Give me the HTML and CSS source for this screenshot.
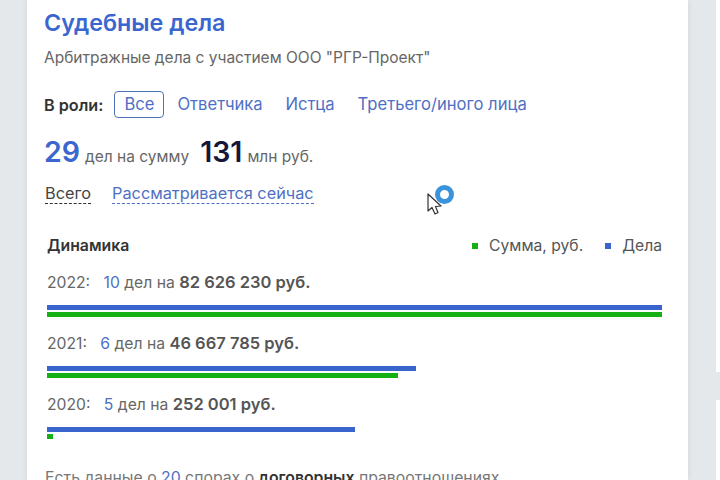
FILE: index.html
```html
<!DOCTYPE html>
<html lang="ru">
<head>
  <meta charset="UTF-8">
  <title>Судебные дела</title>
  <link rel="stylesheet" href="styles.css">
</head>
<body>
  <div class="page">
    <div class="card">
      <h1>Судебные дела</h1>
      <p class="subtitle">Арбитражные дела с участием ООО "РГР-Проект"</p>
      <div class="roles">
        <span class="roles-label">В роли:</span>
        <a class="role role-active">Все</a>
        <a class="role">Ответчика</a>
        <a class="role">Истца</a>
        <a class="role">Третьего/иного лица</a>
      </div>
      <div class="total">
        <span class="total-count">29</span>
        <span class="total-text">дел на сумму</span>
        <span class="total-sum">131</span>
        <span class="total-text">млн руб.</span>
      </div>
      <div class="tabs">
        <a class="tab tab-active">Всего</a>
        <a class="tab">Рассматривается сейчас</a>
      </div>
      <div class="dynamics">
        <div class="dynamics-head">
          <span class="dynamics-title">Динамика</span>
          <div class="legend">
            <span class="legend-item"><i class="dot dot-green"></i>Сумма, руб.</span>
            <span class="legend-item"><i class="dot dot-blue"></i>Дела</span>
          </div>
        </div>
        <div class="year">
          <div class="year-text">2022: <a class="count">10</a> дел на <b>82 626 230 руб.</b></div>
          <div class="bar bar-blue" style="width: 100%"></div>
          <div class="bar bar-green" style="width: 100%"></div>
        </div>
        <div class="year">
          <div class="year-text">2021: <a class="count">6</a> дел на <b>46 667 785 руб.</b></div>
          <div class="bar bar-blue" style="width: 60%"></div>
          <div class="bar bar-green" style="width: 57%"></div>
        </div>
        <div class="year">
          <div class="year-text">2020: <a class="count">5</a> дел на <b>252 001 руб.</b></div>
          <div class="bar bar-blue" style="width: 50%"></div>
          <div class="bar bar-green" style="width: 1%"></div>
        </div>
      </div>
      <p class="note">Есть данные о <a class="count">20</a> спорах о <b>договорных</b> правоотношениях</p>
    </div>
    <div class="side">
      <div class="side-top"></div>
      <div class="side-bottom"></div>
    </div>
  </div>
  <div class="cursor">
    <svg width="18" height="24" viewBox="0 0 18 24">
      <path d="M1 1 L1 18 L5 14.5 L8 21 L11 19.5 L8.5 13.5 L14 13 Z" fill="#fff" stroke="#333" stroke-width="1.2" stroke-linejoin="round"/>
    </svg>
    <span class="spinner"></span>
  </div>
</body>
</html>
```

FILE: styles.css
```css
* {
  margin: 0;
  padding: 0;
  box-sizing: border-box;
}
html, body {
  height: 480px;
  overflow: hidden;
}
body {
  font-family: 'Inter', 'Noto Sans', sans-serif;
  background: #e5e8eb;
  color: #444;
  position: relative;
}
.page {
  display: flex;
  height: 480px;
  padding-left: 27px;
}
.card {
  width: 661px;
  height: 480px;
  background: #fff;
  box-shadow: 0 0 6px rgba(0, 0, 0, 0.08);
  padding: 9px 26px 0 17px;
  overflow: hidden;
  flex-shrink: 0;
}
h1 {
  font-size: 23.3px;
  line-height: 28px;
  font-weight: 600;
  color: #3b66d0;
}
.subtitle {
  margin-top: 11px;
  font-size: 15.5px;
  line-height: 20px;
  color: #666;
}
.roles {
  display: flex;
  align-items: center;
  margin-top: 23px;
  font-size: 16.6px;
}
.roles-label {
  font-size: 16.2px;
  font-weight: 600;
  color: #333;
  margin-right: 11px;
}
.role {
  color: #4f6fc4;
  margin-right: 23px;
  line-height: 25px;
}
.role-active {
  border: 1px solid #4f74b8;
  border-radius: 4px;
  padding: 0 9px;
  margin-right: 13px;
}
.total {
  display: flex;
  align-items: baseline;
  margin-top: 16px;
}
.total-count {
  font-size: 28.5px;
  line-height: 36px;
  font-weight: 600;
  color: #3b66d0;
  margin-right: 5px;
}
.total-sum {
  font-size: 28.5px;
  line-height: 36px;
  font-weight: 600;
  color: #16163a;
  margin: 0 5px 0 11px;
}
.total-text {
  font-size: 15.5px;
  color: #666;
}
.tabs {
  display: flex;
  gap: 21px;
  margin-top: 13px;
  padding-left: 1px;
  font-size: 16.3px;
  line-height: 20px;
}
.tab {
  color: #4f6fc4;
  border-bottom: 1px dashed #4f6fc4;
}
.tab-active {
  color: #444;
  border-bottom-color: #333;
}
.dynamics {
  margin: 32px 0 0 3px;
}
.dynamics-head {
  display: flex;
  justify-content: space-between;
  align-items: center;
  line-height: 20px;
}
.dynamics-title {
  font-size: 15.8px;
  font-weight: 600;
  color: #333;
}
.legend {
  display: flex;
  gap: 22px;
  font-size: 15.7px;
  color: #555;
}
.legend-item {
  display: flex;
  align-items: center;
}
.dot {
  width: 6px;
  height: 6px;
  margin-right: 11px;
}
.dot-green { background: #14b014; }
.dot-blue { background: #3864cc; }
.year {
  margin-top: 16px;
}
.year + .year {
  margin-top: 16px;
}
.year-text {
  font-size: 15.7px;
  line-height: 20px;
  color: #666;
  margin-bottom: 12px;
}
.year-text b, .note b {
  font-weight: 600;
  color: #555;
}
.year-text b {
  font-size: 16.5px;
}
.count {
  color: #4f6fc4;
  margin-left: 9px;
}
.note .count {
  margin-left: 0;
}
.bar {
  height: 5px;
  margin-bottom: 2px;
}
.bar-blue { background: #3864cc; }
.bar-green { background: #14b014; }
.note {
  margin-top: 29px;
  margin-left: 1px;
  font-size: 15.8px;
  line-height: 20px;
  color: #777;
}
.note b {
  color: #333;
}
.side {
  flex: 1;
  display: flex;
  flex-direction: column;
  justify-content: space-between;
  align-items: flex-end;
}
.side-top {
  width: 4px;
  height: 372px;
  background: #fff;
}
.side-bottom {
  width: 4px;
  height: 80px;
  background: #fff;
}
.cursor {
  position: absolute;
  left: 427px;
  top: 185px;
  width: 30px;
  height: 34px;
}
.cursor svg {
  position: absolute;
  left: 0;
  top: 8px;
}
.spinner {
  position: absolute;
  left: 8px;
  top: 0;
  width: 19px;
  height: 19px;
  border: 5px solid #3b93dc;
  border-radius: 50%;
  background: #fff;
}
```
